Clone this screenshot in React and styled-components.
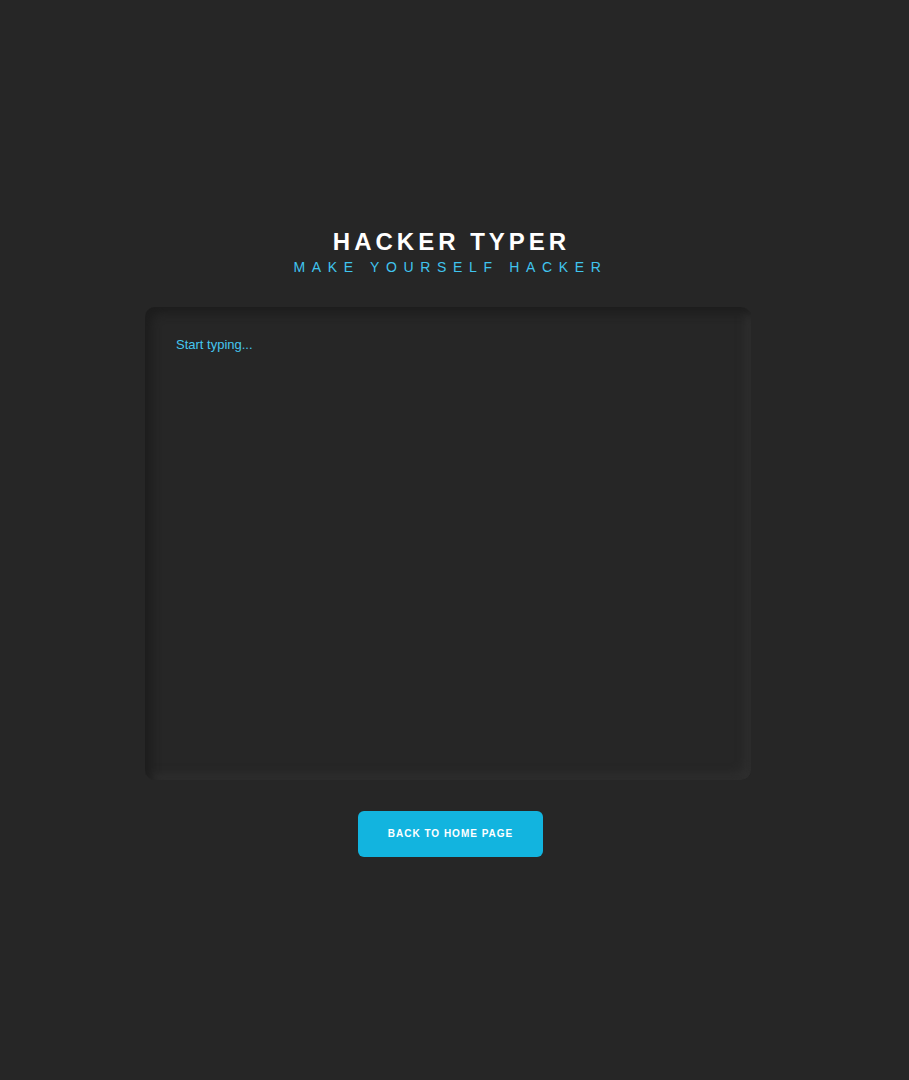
import React from "react"
import styled, { createGlobalStyle } from "styled-components"

const GlobalStyle = createGlobalStyle`
  html, body {
    margin: 0;
    padding: 0;
    background-color: #262626;
  }
  body {
    font-family: "Liberation Sans", Arial, sans-serif;
  }
`

const App = () => {
  return (
    <>
      <GlobalStyle />
      <Page>
        <Heading>
          <Title>HACKER TYPER</Title>
          <Subtitle>MAKE YOURSELF HACKER</Subtitle>
        </Heading>
        <Terminal>
          <Placeholder>Start typing...</Placeholder>
        </Terminal>
        <HomeButton type="button">BACK TO HOME PAGE</HomeButton>
      </Page>
    </>
  )
}

export default App

const Page = styled.main`
  display: flex;
  flex-direction: column;
  align-items: center;
  justify-content: center;
  min-height: 100vh;
  padding-right: 13px;
  padding-top: 4px;
  box-sizing: border-box;
  background-color: #262626;
`

const Heading = styled.header`
  display: flex;
  flex-direction: column;
  align-items: center;
  gap: 3px;
  margin-bottom: 32px;
`

const Title = styled.h1`
  margin: 0 0 0 7px;
  color: #ffffff;
  font-size: 24px;
  line-height: 28px;
  font-weight: 700;
  letter-spacing: 4px;
`

const Subtitle = styled.h2`
  margin: 0 0 0 5px;
  color: #40c4ee;
  font-size: 14px;
  line-height: 16px;
  font-weight: 400;
  letter-spacing: 6.65px;
`

const Terminal = styled.div`
  width: 606px;
  height: 473px;
  box-sizing: border-box;
  padding: 30px 31px;
  border-radius: 10px;
  background-color: #262626;
  box-shadow: inset 6px 6px 10px #1d1d1d, inset -6px -6px 10px #2f2f2f;
`

const Placeholder = styled.p`
  margin: 0;
  color: #45c6f0;
  font-size: 13px;
  line-height: 15px;
`

const HomeButton = styled.button`
  margin: 31px 0 0 5px;
  width: 185px;
  height: 46px;
  border: none;
  border-radius: 6px;
  background-color: #12b4df;
  color: #ffffff;
  font-family: "Liberation Sans", Arial, sans-serif;
  font-size: 10px;
  font-weight: 700;
  letter-spacing: 1px;
  cursor: pointer;
`
